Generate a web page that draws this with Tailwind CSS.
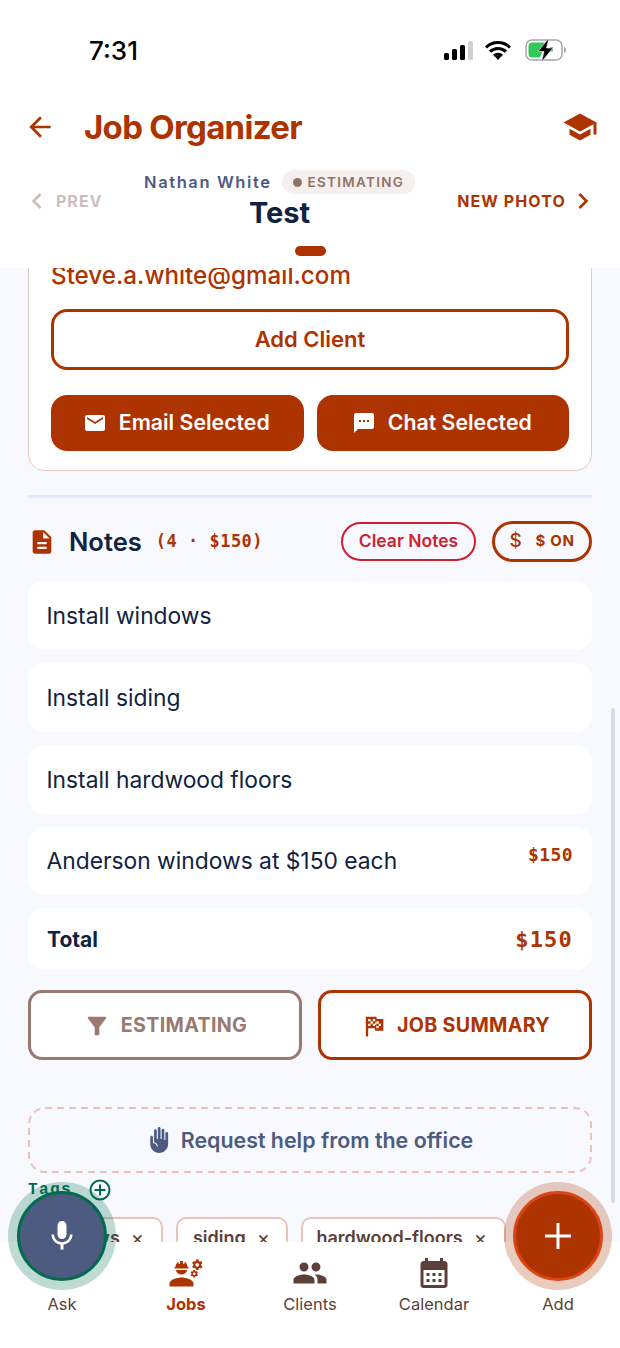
<!DOCTYPE html>
<html lang="en">
<head>
  <meta charset="UTF-8" />
  <meta name="viewport" content="width=device-width, initial-scale=1" />
  <title>Job Organizer</title>
  <script src="https://cdn.jsdelivr.net/npm/@tailwindcss/browser@4"></script>
</head>
<body class="bg-white font-['Inter',sans-serif]">
<div class="relative h-[1348px] w-[620px] overflow-hidden flex flex-col bg-[#f7f9ff]">

  <!-- Header -->
  <header class="h-[268px] shrink-0 bg-white">
    <!-- Status bar -->
    <div class="h-[100px] flex items-start justify-between pt-[35px] pl-[89px] pr-[53px]">
      <span class="text-[26px] leading-[32px] font-medium text-black">7:31</span>
      <div class="flex items-center pt-[3px]">
        <svg class="w-[31px] h-[19px]" viewBox="0 0 31 19">
          <rect x="1" y="12" width="5" height="7" rx="1.5" fill="#000" />
          <rect x="9" y="8" width="5" height="11" rx="1.5" fill="#000" />
          <rect x="17" y="4" width="5" height="15" rx="1.5" fill="#000" />
          <rect x="25" y="0" width="5" height="19" rx="1.5" fill="#d1d1d1" />
        </svg>
        <svg class="ml-[11px] w-[26px] h-[19px]" viewBox="0 0 26 19">
          <path d="M1 6.5a17 17 0 0 1 24 0M5 10.7a11.5 11.5 0 0 1 16 0M9 14.8a6 6 0 0 1 8 0" fill="none" stroke="#000" stroke-width="3" />
          <path d="M13 19l-3-3.4a4.4 4.4 0 0 1 6 0z" fill="#000" />
        </svg>
        <svg class="ml-[14px] w-[42px] h-[24px]" viewBox="0 0 42 24">
          <rect x="1" y="2" width="36" height="20" rx="6" fill="#fff" stroke="#a8a8a8" stroke-width="1.5" />
          <path d="M3.5 8a3.5 3.5 0 0 1 3.5-3.5h14L15 19.5H7A3.500 3.500 0 0 1 3.500 16z" fill="#34c759" />
          <path d="M25 9h3v4l-4 1z" fill="#34c759" />
          <path d="M39 9v6c1.500-.5 2-1.800 2-3s-.5-2.500-2-3z" fill="#a8a8a8" />
          <path d="M24 0L13 13.500h6L16.500 24 28 10h-6.500z" fill="#000" stroke="#fff" stroke-width=".6" />
        </svg>
      </div>
    </div>

    <!-- Title row -->
    <div class="h-[54px] flex items-center justify-between pl-[24px] pr-[22px]">
      <div class="flex items-center gap-[28px]">
        <svg class="w-[32px] h-[32px] fill-[#ad3300]" viewBox="0 0 24 24"><path d="M20 11H7.830l5.590-5.590L12 4l-8 8 8 8 1.410-1.410L7.830 13H20v-2z" /></svg>
        <h1 class="text-[33px] leading-[40px] font-bold tracking-[-0.7px] text-[#ad3300]">Job Organizer</h1>
      </div>
      <svg class="w-[36px] h-[36px] fill-[#ad3300]" viewBox="0 0 24 24"><path d="M5 13.180v4L12 21l7-3.820v-4L12 17l-7-3.820zM12 3L1 9l11 6 9-4.910V17h2V9L12 3z" /></svg>
    </div>

    <!-- Job navigator -->
    <div class="relative h-[94px] flex items-center justify-between pl-[21px] pr-[21px]">
      <div class="flex items-center gap-[3px] text-[#cbbfbb]">
        <svg class="w-[32px] h-[32px] fill-current" viewBox="0 0 24 24"><path d="M15.410 7.410L14 6l-6 6 6 6 1.410-1.410L10.830 12z" /></svg>
        <span class="text-[16px] font-bold tracking-[1px]">PREV</span>
      </div>
      <div class="absolute left-[144px] top-[16px] flex flex-col">
        <div class="flex items-center gap-[10px]">
          <span class="text-[16.500px] leading-[24px] font-semibold tracking-[1.6px] text-[#4d5b80]">Nathan White</span>
          <span class="h-[24px] pl-[11px] pr-[11px] rounded-full bg-[#f5f0ee] flex items-center gap-[6px] text-[13.500px] font-semibold tracking-[1.3px] text-[#937268]">
            <span class="w-[9px] h-[9px] rounded-full bg-[#937268]"></span>ESTIMATING
          </span>
        </div>
        <span class="ml-[105px] mt-[1px] text-[29px] leading-[36px] font-bold text-[#0f2340]">Test</span>
      </div>
      <div class="flex items-center gap-[1px] text-[#ad3300]">
        <span class="text-[16px] font-bold tracking-[1.1px]">NEW PHOTO</span>
        <svg class="w-[32px] h-[32px] fill-current" viewBox="0 0 24 24"><path d="M10 6L8.590 7.410 13.170 12l-4.580 4.590L10 18l6-6z" /></svg>
      </div>
    </div>
    <div class="mx-auto mt-[-2px] h-[10px] w-[31px] rounded-full bg-[#ad3300]"></div>
  </header>

  <!-- Scrolled content -->
  <main class="flex-1 min-h-0 overflow-hidden px-[28px]">
    <!-- Client card -->
    <section class="mt-[-20px] h-[223px] rounded-b-[16px] border border-[#e9c8c0] bg-white px-[22px] pt-[11px]">
      <p class="text-[24.200px] leading-[32px] font-medium text-[#ad3300]">Steve.a.white@gmail.com</p>
      <button class="mt-[17px] w-full h-[61px] rounded-[16px] border-[3px] border-[#ad3300] bg-white text-[22px] font-semibold text-[#ad3300]">Add Client</button>
      <div class="mt-[25px] flex gap-[13px]">
        <button class="flex-1 h-[56px] rounded-[16px] bg-[#ad3300] flex items-center justify-center gap-[12px] pr-[2px] text-[21.300px] font-semibold text-white">
          <svg class="w-[24px] h-[24px] fill-white" viewBox="0 0 24 24"><path d="M20 4H4c-1.100 0-1.990.9-1.990 2L2 18c0 1.100.9 2 2 2h16c1.100 0 2-.9 2-2V6c0-1.100-.9-2-2-2zm0 4l-8 5-8-5V6l8 5 8-5v2z" /></svg>
          Email Selected
        </button>
        <button class="flex-1 h-[56px] rounded-[16px] bg-[#ad3300] flex items-center justify-center gap-[12px] pr-[2px] text-[21.300px] font-semibold text-white">
          <svg class="w-[24px] h-[24px] fill-white" viewBox="0 0 24 24"><path d="M20 2H4c-1.100 0-1.990.9-1.990 2L2 22l4-4h14c1.100 0 2-.9 2-2V4c0-1.100-.9-2-2-2zM9 11H7V9h2v2zm4 0h-2V9h2v2zm4 0h-2V9h2v2z" /></svg>
          Chat Selected
        </button>
      </div>
    </section>

    <div class="mt-[24px] h-[3px] bg-[#e3ecfc]"></div>

    <!-- Notes heading -->
    <div class="mt-[23px] h-[41px] flex items-center">
      <svg class="w-[28px] h-[28px] fill-[#ad3300]" viewBox="0 0 24 24"><path d="M14 2H6c-1.100 0-1.990.9-1.990 2L4 20c0 1.100.89 2 1.990 2H18c1.100 0 2-.9 2-2V8l-6-6zm2 16H8v-2h8v2zm0-4H8v-2h8v2zm-3-5V3.500L18.500 9H13z" /></svg>
      <h2 class="ml-[13px] pt-[2px] text-[25.500px] font-semibold text-[#0f2340]">Notes</h2>
      <span class="ml-[14px] font-['DejaVu_Sans_Mono',monospace] text-[17px] font-bold tracking-[0.5px] text-[#ad3300]">(4 · $150)</span>
      <button class="ml-auto h-[39px] w-[135px] rounded-full border-2 border-[#cf1f2e] text-[17.500px] font-semibold text-[#cf1f2e]">Clear Notes</button>
      <button class="ml-[16px] h-[41px] w-[100px] rounded-full border-[3px] border-[#ad3300] flex items-center justify-center gap-[13px] text-[15px] font-bold tracking-[0.7px] text-[#ad3300]">
        <span class="text-[19px] font-medium">$</span><span>$ ON</span>
      </button>
    </div>

    <!-- Notes -->
    <ul class="mt-[19px] flex flex-col gap-[13px] text-[22.800px] text-[#0f2340]">
      <li class="h-[69px] rounded-[16px] bg-white pl-[18.500px] pr-[19px] pt-[1px] flex items-center">Install windows</li>
      <li class="h-[69px] rounded-[16px] bg-white pl-[18.500px] pr-[19px] pt-[1px] flex items-center">Install siding</li>
      <li class="h-[69px] rounded-[16px] bg-white pl-[18.500px] pr-[19px] pt-[1px] flex items-center">Install hardwood floors</li>
      <li class="h-[68px] rounded-[16px] bg-white pl-[18.500px] pr-[19px] pt-[1px] flex items-center justify-between">
        Anderson windows at $150 each
        <span class="self-start mt-[13px] font-['DejaVu_Sans_Mono',monospace] text-[18px] font-bold tracking-[0.4px] text-[#ad3300]">$150</span>
      </li>
      <li class="h-[62px] rounded-[16px] bg-white px-[19px] pt-[1px] flex items-center justify-between">
        <span class="text-[21px] font-bold">Total</span>
        <span class="font-['DejaVu_Sans_Mono',monospace] text-[22px] font-bold tracking-[1.2px] text-[#ad3300]">$150</span>
      </li>
    </ul>

    <!-- Actions -->
    <div class="mt-[20px] flex gap-[16px]">
      <button class="flex-1 h-[70px] rounded-[14px] border-[3px] border-[#9a7a70] bg-white flex items-center justify-center gap-[10px] pt-[1px] text-[19.700px] font-bold tracking-[0.3px] text-[#9a7a70]">
        <svg class="w-[28px] h-[28px] fill-current" viewBox="0 0 24 24"><path d="M4.250 5.610C6.270 8.200 10 13 10 13v6c0 .55.45 1 1 1h2c.55 0 1-.45 1-1v-6s3.720-4.800 5.740-7.390C20.250 4.950 19.780 4 18.950 4H5.040c-.83 0-1.300.95-.79 1.610z" /></svg>
        <span class="pt-[1px]">ESTIMATING</span>
      </button>
      <button class="flex-1 h-[70px] rounded-[14px] border-[3px] border-[#ad3300] bg-white flex items-center justify-center gap-[9px] pt-[1px] text-[19.700px] font-bold tracking-[0.3px] text-[#ad3300]">
        <svg class="w-[28px] h-[28px] fill-current" viewBox="0 0 24 24"><path d="M14.400 6H20V16H13L12.600 14H7V21H5V4H14L14.400 6M14 14H16V12H18V10H16V8H14V10L13 8V6H11V8H9V6H7V8H9V10H7V12H9V10H11V12H13V10L14 12V14M11 10V8H13V10H11M14 10H16V12H14V10Z" /></svg>
        <span class="pt-[1px]">JOB SUMMARY</span>
      </button>
    </div>

    <!-- Help -->
    <button class="relative mt-[47px] w-full h-[66px] flex items-center justify-center gap-[8px] text-[21.400px] font-semibold text-[#4d5b80]">
      <svg class="absolute inset-0 w-[564px] h-[66px]" viewBox="0 0 564 66" fill="none"><rect x="1" y="1" width="562" height="64" rx="16" stroke="#eac3ba" stroke-width="2" stroke-dasharray="7 5" /></svg>
      <svg class="w-[26px] h-[26px] fill-current -scale-x-100" viewBox="0 0 24 24"><path d="M19.750 8c-.69 0-1.250.56-1.250 1.250V15H18c-1.650 0-3 1.350-3 3h-1c0-2.040 1.530-3.720 3.500-3.970V3.250C17.500 2.560 16.940 2 16.250 2S15 2.560 15 3.250V11h-1V1.250C14 .56 13.440 0 12.750 0S11.500.56 11.500 1.250V11h-1V2.750c0-.69-.56-1.250-1.250-1.250S8 2.060 8 2.750V12H7V5.750C7 5.060 6.440 4.500 5.750 4.500S4.500 5.060 4.500 5.750v10C4.500 20.310 8.190 24 12.750 24S21 20.310 21 15.750v-6.500C21 8.560 20.440 8 19.750 8z" /></svg>
      Request help from the office
    </button>

    <!-- Tags -->
    <div class="mt-[5px] h-[24px] flex items-center gap-[17px] text-[#006b4f]">
      <span class="font-['Liberation_Mono',monospace] text-[16px] font-bold tracking-[1.4px]">Tags</span>
      <svg class="w-[22px] h-[22px]" viewBox="0 0 22 22" fill="none" stroke="currentColor" stroke-width="2"><circle cx="11" cy="11" r="9.500" /><path d="M11 5.500v11M5.500 11h11" /></svg>
    </div>
    <div class="mt-[15px] flex gap-[13px] text-[18px] font-semibold text-[#5b3f38]">
      <span class="h-[44px] w-[135px] shrink-0 rounded-[10px] border-2 border-[#eac3ba] bg-white flex items-center justify-end gap-[11px] pr-[17px] pb-[3px]">windows<span class="text-[20px] font-normal">×</span></span>
      <span class="h-[44px] w-[112px] shrink-0 rounded-[10px] border-2 border-[#eac3ba] bg-white flex items-center justify-end gap-[11px] pr-[16px] pb-[3px]">siding<span class="text-[20px] font-normal">×</span></span>
      <span class="h-[44px] w-[205px] shrink-0 rounded-[10px] border-2 border-[#eac3ba] bg-white flex items-center justify-end gap-[11px] pr-[17px] pb-[3px]">hardwood-floors<span class="text-[20px] font-normal">×</span></span>
    </div>
  </main>

  <!-- Bottom nav -->
  <nav class="relative h-[106px] shrink-0 bg-white grid grid-cols-[124px_124px_124px_124px_124px] text-[16.500px] text-[#5b3f38]">
    <div class="flex flex-col items-center pt-[50px]">Ask</div>
    <div class="flex flex-col items-center pt-[13px] font-bold text-[#ad3300]">
      <svg class="w-[36px] h-[36px] fill-current" viewBox="0 0 24 24">
        <path d="M9 15c-2.670 0-8 1.340-8 4v2h16v-2c0-2.660-5.330-4-8-4z" />
        <path d="M22.100 6.840c.01-.11.02-.22.02-.34 0-.12-.01-.23-.03-.34l.74-.58c.07-.05.08-.15.04-.22l-.7-1.210c-.04-.08-.14-.1-.21-.08l-.86.35c-.18-.14-.38-.25-.59-.34l-.13-.93c-.01-.08-.08-.14-.17-.14h-1.400c-.09 0-.16.06-.17.14l-.13.93c-.21.09-.41.21-.59.34l-.87-.35c-.08-.03-.17 0-.21.08l-.7 1.210c-.04.08-.03.17.04.22l.74.58c-.02.11-.03.23-.03.34 0 .11.01.23.03.34l-.74.58c-.07.05-.08.15-.04.22l.7 1.210c.04.08.14.1.21.08l.87-.35c.18.14.38.25.59.34l.13.93c.01.09.08.15.17.15h1.400c.09 0 .16-.06.17-.14l.13-.93c.21-.09.41-.21.59-.34l.87.35c.08.03.17 0 .21-.08l.7-1.210c.04-.08.03-.17-.04-.22l-.73-.58zm-2.600.91c-.69 0-1.250-.56-1.250-1.250s.56-1.250 1.250-1.250 1.250.56 1.250 1.250-.56 1.250-1.250 1.250z" />
        <path d="M19.920 11.680l-.5-.87c-.03-.06-.1-.08-.15-.06l-.62.25c-.13-.1-.27-.18-.42-.24l-.09-.66c-.01-.06-.06-.1-.12-.1h-1c-.06 0-.11.04-.12.11l-.09.66c-.15.06-.29.15-.42.24l-.62-.25c-.06-.02-.12 0-.15.06l-.5.87c-.03.06-.02.12.03.16l.53.41c-.02.08-.03.16-.03.24 0 .08.01.17.02.25l-.53.41c-.05.04-.06.11-.03.16l.5.87c.03.06.1.08.15.06l.62-.25c.13.1.27.18.42.24l.09.66c.01.07.06.11.12.11h1c.06 0 .11-.04.12-.11l.09-.66c.15-.06.29-.15.42-.24l.62.25c.06.02.12 0 .15-.06l.5-.87c.03-.06.02-.12-.03-.16l-.52-.41c.02-.08.03-.16.03-.25 0-.09-.01-.17-.03-.25l.53-.41c.05-.04.06-.11.04-.17zm-2.420 1.650c-.46 0-.83-.38-.83-.83 0-.46.38-.83.83-.83s.83.38.83.83c0 .46-.37.83-.83.83z" />
        <path d="M4.740 9h8.530c.27 0 .49-.22.49-.49v-.02c0-.27-.22-.49-.49-.49H13c0-1.480-.81-2.750-2-3.450v.95c0 .28-.22.5-.5.5s-.5-.22-.5-.5V4.140C9.680 4.060 9.350 4 9 4s-.68.06-1 .14V5.500c0 .28-.22.5-.5.5S7 5.780 7 5.500v-.95C5.810 5.250 5 6.520 5 8h-.26c-.27 0-.49.22-.49.49v.03c0 .26.22.48.49.48zM9 13c1.860 0 3.410-1.280 3.860-3H5.140c.45 1.720 2 3 3.860 3z" />
      </svg>
      <span class="mt-[1px]">Jobs</span>
    </div>
    <div class="flex flex-col items-center pt-[13px]">
      <svg class="w-[36px] h-[36px] fill-current" viewBox="0 0 24 24"><path d="M16 11c1.660 0 2.990-1.340 2.990-3S17.660 5 16 5c-1.660 0-3 1.340-3 3s1.340 3 3 3zm-8 0c1.660 0 2.990-1.340 2.990-3S9.660 5 8 5C6.340 5 5 6.340 5 8s1.340 3 3 3zm0 2c-2.330 0-7 1.170-7 3.500V19h14v-2.500c0-2.330-4.670-3.500-7-3.500zm8 0c-.29 0-.62.02-.97.05 1.160.84 1.970 1.970 1.970 3.450V19h6v-2.500c0-2.330-4.670-3.500-7-3.500z" /></svg>
      <span class="mt-[1px]">Clients</span>
    </div>
    <div class="flex flex-col items-center pt-[13px]">
      <svg class="w-[36px] h-[36px] fill-current" viewBox="0 0 24 24"><path d="M19 4h-1V2h-2v2H8V2H6v2H5c-1.110 0-1.990.9-1.990 2L3 20c0 1.100.89 2 2 2h14c1.100 0 2-.9 2-2V6c0-1.100-.9-2-2-2zm0 16H5V10h14v10zM9 14H7v-2h2v2zm4 0h-2v-2h2v2zm4 0h-2v-2h2v2zm-8 4H7v-2h2v2zm4 0h-2v-2h2v2zm4 0h-2v-2h2v2z" /></svg>
      <span class="mt-[1px]">Calendar</span>
    </div>
    <div class="flex flex-col items-center pt-[50px]">Add</div>
  </nav>

  <!-- Scrollbar -->
  <div class="absolute left-[611px] top-[708px] h-[495px] w-[4px] rounded-full bg-[#d9dbe1]"></div>

  <!-- Floating buttons -->
  <button class="absolute left-[8px] top-[1182px] w-[108px] h-[108px] rounded-full bg-[#006b4f]/25 flex items-center justify-center">
    <span class="w-[90px] h-[90px] rounded-full border-[3px] border-[#006b4f] bg-[#4d5b80] flex items-center justify-center">
      <svg class="w-[36px] h-[36px] fill-white" viewBox="0 0 24 24"><path d="M12 14c1.660 0 3-1.340 3-3V5c0-1.660-1.340-3-3-3S9 3.340 9 5v6c0 1.660 1.340 3 3 3zm5.300-3c0 3-2.540 5.100-5.300 5.100S6.700 14 6.700 11H5c0 3.410 2.720 6.230 6 6.720V21h2v-3.280c3.280-.48 6-3.300 6-6.720h-1.700z" /></svg>
    </span>
  </button>
  <button class="absolute left-[504px] top-[1182px] w-[108px] h-[108px] rounded-full bg-[#ad3300]/25 flex items-center justify-center">
    <span class="w-[90px] h-[90px] rounded-full border-[3px] border-[#dc4511] bg-[#ad3300] flex items-center justify-center">
      <svg class="w-[28px] h-[28px]" viewBox="0 0 28 28" fill="none" stroke="#fff" stroke-width="3"><path d="M14 1v26M1 14h26" /></svg>
    </span>
  </button>
</div>
</body>
</html>
